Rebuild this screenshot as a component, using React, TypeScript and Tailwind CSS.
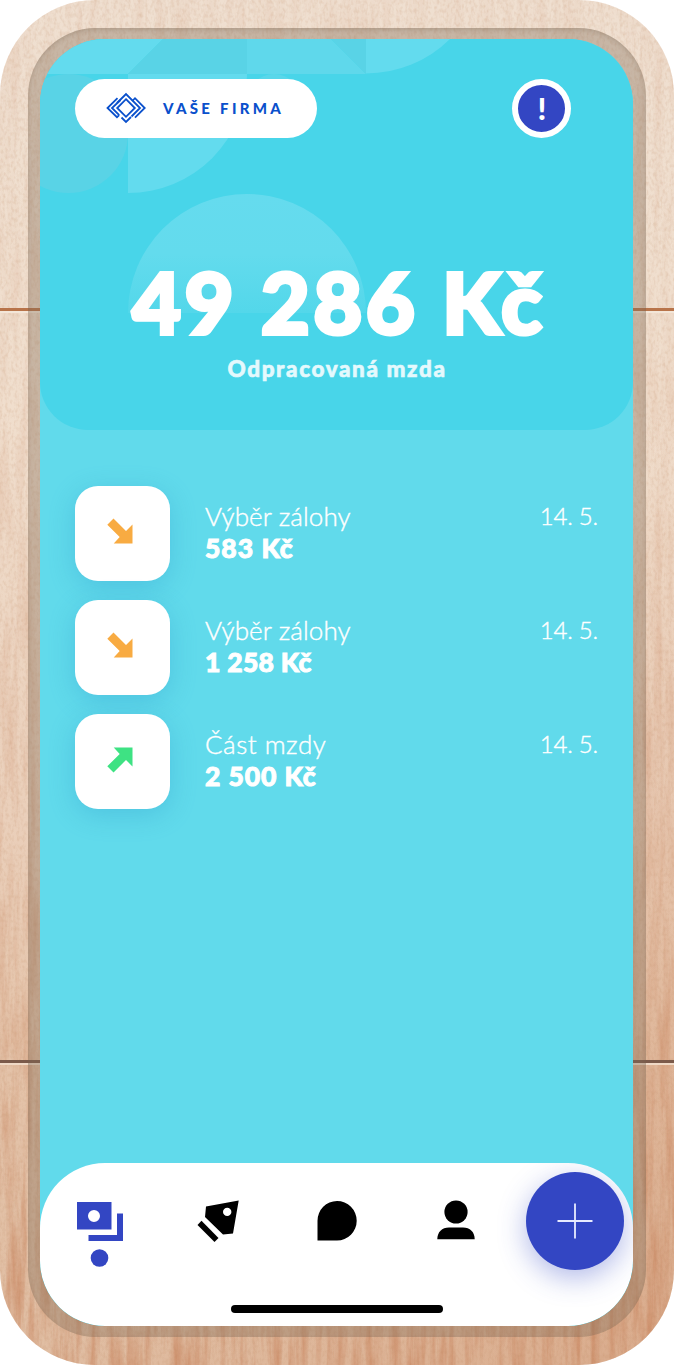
import React from "react";

function Wood() {
  return (
    <svg className="absolute inset-0 h-[1366px] w-[674px]" viewBox="0 0 674 1366" aria-hidden="true">
      <defs>
        <filter id="grain" x="0" y="0" width="100%" height="100%" colorInterpolationFilters="sRGB">
          <feTurbulence type="fractalNoise" baseFrequency="0.11 0.009" numOctaves="4" seed="8" />
          <feColorMatrix values="0 0 0 0 0.76  0 0 0 0 0.46  0 0 0 0 0.3  2.4 0 0 0 -0.95" />
        </filter>
        <filter id="speck" x="0" y="0" width="100%" height="100%" colorInterpolationFilters="sRGB">
          <feTurbulence type="fractalNoise" baseFrequency="0.35 0.22" numOctaves="2" seed="3" />
          <feColorMatrix values="0 0 0 0 0.72  0 0 0 0 0.5  0 0 0 0 0.34  1.4 0 0 0 -0.6" />
        </filter>
        <linearGradient id="tone" x1="0" y1="0" x2="0" y2="1">
          <stop offset="0" stopColor="#efdfd0" />
          <stop offset="0.3" stopColor="#f0decd" />
          <stop offset="0.6" stopColor="#eacfba" />
          <stop offset="0.78" stopColor="#e4c3a9" />
          <stop offset="1" stopColor="#e0bda2" />
        </linearGradient>
        <linearGradient id="rightTone" x1="0.5" y1="0.35" x2="1" y2="1">
          <stop offset="0.3" stopColor="#cf8b63" stopOpacity="0" />
          <stop offset="1" stopColor="#c97f55" stopOpacity="0.3" />
        </linearGradient>
        <linearGradient id="fade" x1="0" y1="0" x2="0" y2="1">
          <stop offset="0" stopColor="#fff" stopOpacity="0.1" />
          <stop offset="0.35" stopColor="#fff" stopOpacity="0.13" />
          <stop offset="0.7" stopColor="#fff" stopOpacity="0.28" />
          <stop offset="1" stopColor="#fff" stopOpacity="0.55" />
        </linearGradient>
        <mask id="grainMask"><rect width="674" height="1366" fill="url(#fade)" /></mask>
        <clipPath id="frame"><rect width="674" height="1365" rx="95" /></clipPath>
      </defs>
      <g clipPath="url(#frame)">
        <rect width="674" height="1366" fill="url(#tone)" />
        <rect width="674" height="1366" fill="url(#rightTone)" />
        <g mask="url(#grainMask)"><rect width="674" height="1366" filter="url(#grain)" /></g>
        <rect width="674" height="1366" filter="url(#speck)" opacity="0.28" />
        <rect y="308" width="674" height="3" fill="#b8744a" />
        <rect y="311" width="674" height="2" fill="#f3e6d8" />
        <rect y="1060" width="674" height="3" fill="#7b5a4a" />
        <rect y="1063" width="674" height="2" fill="#efd9c6" />
      </g>
    </svg>
  );
}

function HeaderPattern() {
  return (
    <svg className="absolute left-0 top-0 h-[391px] w-[593px]" viewBox="40 39 593 391" aria-hidden="true">
      <defs>
        <linearGradient id="dome" x1="0" y1="0" x2="0" y2="1">
          <stop offset="0" stopColor="#65dbee" />
          <stop offset="0.5" stopColor="#63dbed" />
          <stop offset="1" stopColor="#53d7ea" />
        </linearGradient>
      </defs>
      <path d="M40 39H163L128 74H40Z" fill="#63dbee" />
      <path d="M163 39H247V74H128Z" fill="#59d3e6" />
      <path d="M247 39H331L366 74H247Z" fill="#5fd8eb" />
      <path d="M331 39H366V74Z" fill="#59d3e6" />
      <path d="M366 39H450A119 119 0 0 1 366 73.500Z" fill="#63dbee" />
      <circle cx="68.500" cy="133.500" r="59.500" fill="#59d3e6" />
      <path d="M128 74H247A119 119 0 0 1 128 193Z" fill="#63dbee" />
      <circle cx="274" cy="102" r="28" fill="#59d7ea" />
      <path d="M128 313A119 119 0 0 1 366 313Z" fill="url(#dome)" />
    </svg>
  );
}

function Logo() {
  return (
    <svg className="relative -top-px h-[32px] w-[42px]" viewBox="-21 -16 42 32" fill="none" stroke="#0a50cc" strokeWidth="1.8">
      <path d="M0 -8.800L8.800 0L0 8.800L-8.800 0Z" />
      <path d="M-9 -5L0 -14L14 0L5.500 8.500M-4.500 9.500L0 14L5 9" />
      <path d="M-8.500 -9.800L-18.500 0L-9 9.200L-6.800 7.200M-5.500 -8L-14 0L-6.800 7.200" />
      <path d="M6.300 -7L9 -9.800L18.700 0L9 9.600" />
    </svg>
  );
}

function ArrowIcon({ up }: { up?: boolean }) {
  return up ? (
    <svg className="mb-[3px] mr-[5px] h-[26px] w-[26px]" viewBox="0 0 26 26">
      <path d="M6.700 0.500H25.500V19.500L19 13L6.500 25.500L0.300 19.300L12.700 7Z" fill="#3ee283" />
    </svg>
  ) : (
    <svg className="mb-[6px] mr-[5px] h-[26px] w-[26px]" viewBox="0 0 26 26">
      <path d="M6.700 25.500H25.500V6.500L19 13L6.500 0.500L0.300 6.700L12.700 19Z" fill="#f8ab42" />
    </svg>
  );
}

const rows = [
  { title: "Výběr zálohy", amount: "583 Kč", date: "14. 5.", up: false, cls: "tracking-[1px]", tcls: "tracking-[0.1px]" },
  { title: "Výběr zálohy", amount: "1 258 Kč", date: "14. 5.", up: false, cls: "tracking-[0.3px]", tcls: "tracking-[0.1px]" },
  { title: "Část mzdy", amount: "2 500 Kč", date: "14. 5.", up: true, cls: "tracking-[0.9px]", tcls: "tracking-[0.5px]" },
];

export default function App() {
  return (
    <div className="relative h-[1366px] w-[674px] overflow-hidden bg-white font-['Lato',sans-serif]">
      <Wood />
      <div className="relative h-[1366px] px-[28px] pt-[28px]">
        <div className="h-[1309px] rounded-[68px] bg-[#7d6b57]/35 px-[12px] pt-[11px] shadow-[inset_0_2px_4px_rgba(90,70,50,0.2)]">
          <main className="flex h-[1287px] w-[593px] flex-col overflow-hidden rounded-[65px] bg-[#61daeb]">
            <header className="relative h-[391px] shrink-0 overflow-hidden rounded-b-[48px] bg-[#48d5e9]">
              <HeaderPattern />
              <div className="relative flex items-center justify-between pl-[35px] pr-[62px] pt-[40px]">
                <div className="flex h-[59px] w-[242px] items-center rounded-full bg-white pl-[30px]">
                  <Logo />
                  <span className="ml-[16px] whitespace-nowrap text-[15px] font-black tracking-[3.3px] text-[#0a50cc]">VAŠE FIRMA</span>
                </div>
                <div className="flex h-[59px] w-[59px] items-center justify-center rounded-full border-[6px] border-white bg-[#3346c3]">
                  <span className="-mt-[2px] pl-px text-[31px] font-black leading-[46px] text-white">!</span>
                </div>
              </div>
              <div className="relative mt-[116px] flex flex-col items-center text-white">
                <div className="whitespace-nowrap pb-[2px] pl-[5px] pt-[4px] text-[84px] font-black leading-[88px] tracking-[3.8px] [-webkit-text-stroke:4px_white]">49 286 Kč</div>
                <div className="mt-[7px] whitespace-nowrap pl-px text-[22.500px] font-black leading-[28px] tracking-[1.6px] text-[#e4f9fd] [-webkit-text-stroke:0.6px_#e4f9fd]">Odpracovaná mzda</div>
              </div>
            </header>
            <section className="flex flex-col gap-[19px] px-[35px] pt-[56px]">
              {rows.map((r, i) => (
                <div key={i} className="flex h-[95px] text-white">
                  <div className="flex h-[95px] w-[95px] items-center justify-center rounded-[23px] bg-white shadow-[0_6px_26px_rgba(40,150,200,0.32)]">
                    <ArrowIcon up={r.up} />
                  </div>
                  <div className="ml-[35px] flex-1 pt-[14px]">
                    <div className={"whitespace-nowrap text-[26px] font-light leading-[32px] [-webkit-text-stroke:0.4px_white] " + r.tcls}>{r.title}</div>
                    <div className={"mt-px whitespace-nowrap text-[26.500px] font-black leading-[31px] [-webkit-text-stroke:1px_white] " + r.cls}>{r.amount}</div>
                  </div>
                  <div className="whitespace-nowrap pt-[14px] text-[24px] font-light leading-[32px] tracking-[-0.2px] [-webkit-text-stroke:0.4px_white]">{r.date}</div>
                </div>
              ))}
            </section>
            <nav className="mt-auto h-[163px] overflow-hidden rounded-[65px] bg-white">
              <div className="flex h-[118px] items-start pt-[9px]">
                <svg className="ml-[37px] mt-[30px] h-[66px] w-[46px]" viewBox="0 0 46 66" fill="#3346c3">
                  <path fillRule="evenodd" d="M0 0H34.500V27.500H0ZM17 8A6 6 0 1 0 17 20A6 6 0 1 0 17 8Z" />
                  <path d="M40 11.500H46V39H11.500V33H40Z" />
                  <circle cx="22.500" cy="56" r="8.800" />
                </svg>
                <svg className="ml-[74px] mt-[28px] h-[43px] w-[42px]" viewBox="0 0 42 43">
                  <path fillRule="evenodd" d="M9 6.500L41.700 0.500L36 33.500L26 34.500L8 17ZM30.200 7.700A4.200 4.200 0 1 0 30.200 16.100A4.200 4.200 0 1 0 30.200 7.700Z" />
                  <path d="M4.500 20.700L0.500 25L17.500 42L21.500 38Z" />
                </svg>
                <svg className="ml-[78px] mt-[29px] h-[40px] w-[40px]" viewBox="0 0 40 40">
                  <path d="M20 0A19.700 19.700 0 0 1 20 39.400H0.500V19.700A19.700 19.700 0 0 1 20 0Z" />
                </svg>
                <svg className="ml-[80px] mt-[28px] h-[40px] w-[38px]" viewBox="0 0 38 40">
                  <circle cx="19" cy="12" r="11.600" />
                  <path d="M0.300 39.300C0.300 32 5 27.500 12 27.500H26C33 27.500 37.700 32 37.700 39.300Z" />
                </svg>
                <div className="ml-[51px] flex h-[98px] w-[98px] items-center justify-center rounded-full bg-[#3346c3] shadow-[0_8px_28px_rgba(51,70,195,0.38)]">
                  <svg className="h-[36px] w-[36px]" viewBox="0 0 36 36" stroke="#e8ebff" strokeWidth="1.800">
                    <path d="M18 0.500V35.500M0.500 18H35.500" />
                  </svg>
                </div>
              </div>
              <div className="mx-auto mt-[24px] h-[8px] w-[212px] rounded-full bg-black" />
            </nav>
          </main>
        </div>
      </div>
    </div>
  );
}
